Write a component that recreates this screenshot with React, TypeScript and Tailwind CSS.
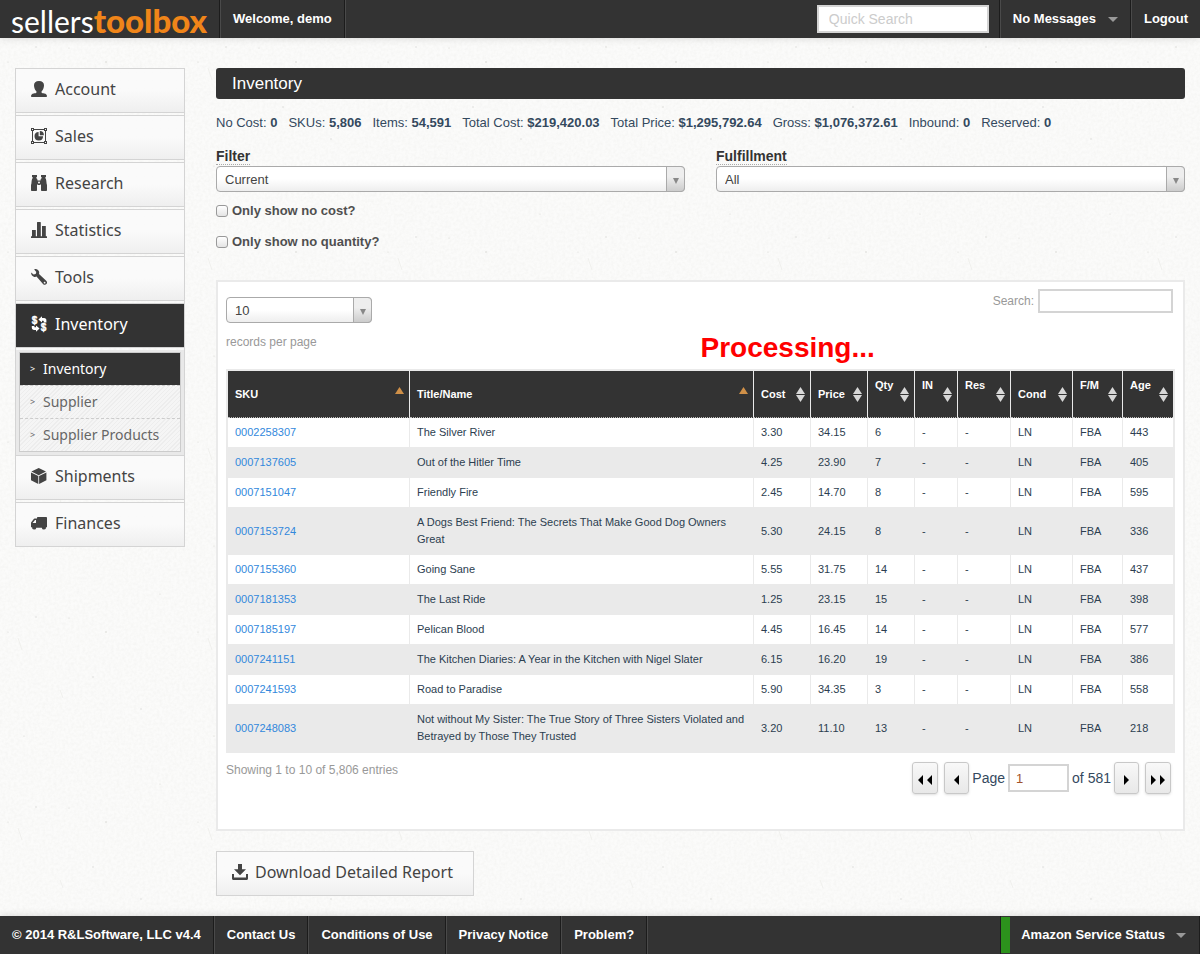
import type { ReactNode } from "react";

type IconProps = { className?: string };

const svgBase = "h-4 w-4 shrink-0";

function UserIcon({ className = "" }: IconProps) {
  return (
    <svg viewBox="0 0 16 16" fill="currentColor" className={`${svgBase} ${className}`} aria-hidden="true">
      <path d="M8 0c3.400 0 5 1.600 5 4.300 0 2.500-1 4.900-2.400 6v1.400c.4.400 1.400.5 2.700.8 1.700.4 2.700 1.100 2.700 2.700 0 .5-.3.800-.8.800H.8c-.5 0-.8-.3-.8-.8 0-1.600 1-2.300 2.700-2.700 1.300-.3 2.300-.4 2.700-.8v-1.400C4 9.200 3 6.800 3 4.300 3 1.600 4.600 0 8 0z" />
    </svg>
  );
}

function SalesIcon({ className = "" }: IconProps) {
  return (
    <svg viewBox="0 0 16 16" fill="currentColor" className={`${svgBase} ${className}`} aria-hidden="true">
      <path d="M1.500 1.500h13v13h-13z" fill="none" stroke="currentColor" strokeWidth="1" />
      <path d="M0 0h3v3H0zM13 0h3v3h-3zM0 13h3v3H0zM13 13h3v3h-3z" />
      <path d="M1 1h1v1H1zM14 1h1v1h-1zM1 14h1v1H1zM14 14h1v1h-1z" fill="#f8f8f8" />
      <path d="M7.600 3.900v4.400h4.500a4.300 4.300 0 1 1-4.500-4.400z" />
      <path d="M8.800 3.100a4.200 4.200 0 0 1 4.100 4.100H8.800z" />
    </svg>
  );
}

function BinocularsIcon({ className = "" }: IconProps) {
  return (
    <svg viewBox="0 0 16 16" fill="currentColor" className={`${svgBase} ${className}`} aria-hidden="true">
      <path d="M1 0h5v2h-.6v1.300c.7.400 1.100 1 1.100 1.900v.3h3v-.3c0-.9.400-1.500 1.100-1.900V2H10V0h5v2h-.6v1.300c.9 1 .9 2.500 1.200 5.200l.4 1.500v5.200c0 .5-.3.800-.8.800h-4.400c-.5 0-.8-.3-.8-.8V9.500H9.500c-.4.500-.9.500-1.500.5s-1.100 0-1.500-.5H6v5.700c0 .5-.3.800-.8.800H.8c-.5 0-.8-.3-.8-.8V10l.4-1.500c.3-2.700.3-4.200 1.200-5.200V2H1z" />
      <circle cx="8" cy="7.500" r="1" fill="#f8f8f8" />
    </svg>
  );
}

function BarsIcon({ className = "" }: IconProps) {
  return (
    <svg viewBox="0 0 16 16" fill="currentColor" className={`${svgBase} ${className}`} aria-hidden="true">
      <path d="M0 14.300h16V16H0zM1 8h3.800v7H1zM6 .5C6 .2 6.200 0 6.500 0h2.800c.3 0 .5.2.5.500V15H6zM11 4h3.800v11H11z" />
    </svg>
  );
}

function WrenchIcon({ className = "" }: IconProps) {
  return (
    <svg viewBox="0 0 16 16" fill="currentColor" className={`${svgBase} ${className}`} aria-hidden="true">
      <path
        fillRule="evenodd"
        d="M3.200.4c1.900-.8 4.200.2 4.800 2.100.3.900.2 1.600 0 2.400l7.200 6.800c1.100 1.100 1.100 2.500.2 3.400s-2.400.9-3.400-.2L5.500 7.600c-.9.400-1.800.4-2.700.1C1 7.100 0 5.500.1 3.500l2.500 2.100 2.100-.5.600-2.100zM13.600 12.800a.9.900 0 1 0 .01 1.800.9.900 0 0 0-.01-1.800z"
      />
    </svg>
  );
}

function ExchangeIcon({ className = "" }: IconProps) {
  return (
    <svg viewBox="0 0 16 16" fill="currentColor" className={`${svgBase} overflow-visible ${className}`} aria-hidden="true">
      <g fontSize="10" fontWeight="700" textAnchor="middle" stroke="currentColor" strokeWidth="0.4" fontFamily="Liberation Sans, sans-serif">
        <text x="3.500" y="8">$</text>
        <text x="12.500" y="15.300">$</text>
      </g>
      <path d="M7.400 3.400 11 .3v1.800h2c1.600 0 2.400.9 2.400 2.300v2h-2.600V5.300c0-.4-.2-.6-.6-.6H11v1.700zM8.600 12.600 5 15.700v-1.800H3.200c-1.600 0-2.400-.9-2.400-2.300V9.900h2.600v.8c0 .4.200.6.600.6h1V9.600z" />
    </svg>
  );
}

function BoxIcon({ className = "" }: IconProps) {
  return (
    <svg viewBox="0 0 16 16" fill="currentColor" className={`${svgBase} ${className}`} aria-hidden="true">
      <path d="M7.700 0 15 3.500 7.700 7.200.4 3.500zM0 4.400l7.300 3.700V16L0 12.200zM15.400 4.400 8.100 8.100V16l7.300-3.800z" />
    </svg>
  );
}

function TruckIcon({ className = "" }: IconProps) {
  return (
    <svg viewBox="0 0 16 16" fill="currentColor" className={`${svgBase} ${className}`} aria-hidden="true">
      <path
        fillRule="evenodd"
        d="M6.800 2h8.400c.5 0 .8.300.8.800v9.400h-1a2.100 2.100 0 0 1-4.200.5H5.300a2.100 2.100 0 0 1-4.200-.5H0V8.200c0-.5.100-.8.400-1.200l2-2.600c.4-.5.800-.8 1.400-.8H6v-.8c0-.5.300-.8.800-.8zM4 5 1.600 8H5V5z"
      />
    </svg>
  );
}

function DownloadIcon({ className = "" }: IconProps) {
  return (
    <svg viewBox="0 0 16 16" fill="currentColor" className={`${svgBase} ${className}`} aria-hidden="true">
      <path d="M6 0h4v5.200h4L8 11.200l-6-6h4z" />
      <path d="M0 10h2v3.600h12V10h2v4.500c0 .9-.6 1.500-1.500 1.500h-13C.6 16 0 15.400 0 14.500z" />
    </svg>
  );
}

function Caret() {
  return (
    <svg viewBox="0 0 10 5" className="h-[5px] w-[10px] shrink-0 fill-[#999]" aria-hidden="true">
      <path d="M0 0h10L5 5z" />
    </svg>
  );
}

function SortIcon({ active }: { active?: boolean }) {
  return (
    <svg viewBox="0 0 9 15" className="h-[15px] w-[9px] shrink-0" aria-hidden="true">
      <path d="M4.500 0 9 7H0z" fill={active ? "#d09048" : "#d8d8d8"} />
      {!active && <path d="M0 8h9l-4.500 7z" fill="#d8d8d8" />}
    </svg>
  );
}

/* Light paper grain with scattered specks, drawn behind the page content. */
function PaperTexture() {
  return (
    <svg className="pointer-events-none absolute inset-0 -z-10 h-full w-full" aria-hidden="true">
      <defs>
        <filter id="grain" x="0" y="0" width="100%" height="100%">
          <feTurbulence type="fractalNoise" baseFrequency="0.35" numOctaves="3" seed="4" />
          <feColorMatrix values="0 0 0 0 0.45  0 0 0 0 0.45  0 0 0 0 0.4  0.14 0 0 0 -0.045" />
        </filter>
        <pattern id="specks" width="190" height="190" patternUnits="userSpaceOnUse">
          <g fill="#d6d6d2">
            <circle cx="36" cy="47" r="0.7" />
            <circle cx="69" cy="48" r="0.6" />
            <circle cx="8" cy="62" r="0.6" />
            <circle cx="106" cy="62" r="0.8" />
            <circle cx="160" cy="24" r="0.6" />
            <circle cx="93" cy="107" r="0.7" />
            <circle cx="141" cy="139" r="0.7" />
            <circle cx="24" cy="166" r="0.6" />
          </g>
          <path d="M18 68l4 12M60 120l3 8" stroke="#f0f0ed" fill="none" />
        </pattern>
      </defs>
      <rect width="100%" height="100%" filter="url(#grain)" />
      <rect width="100%" height="100%" fill="url(#specks)" />
    </svg>
  );
}

const navItemClass =
  "flex h-full items-center gap-3 border-l border-r border-l-[#4a4a4a] border-r-[#1c1c1c] px-3 text-[13px] font-bold text-white";

function SideLink({ icon, label, active }: { icon: ReactNode; label: string; active?: boolean }) {
  return (
    <a
      href="#"
      className={
        active
          ? "flex items-center gap-2 border-y border-[#d4d4d4] bg-[#333] pt-2 pr-3 pb-[11px] pl-[15px] text-base leading-6 text-white"
          : "flex items-center gap-2 border-y border-[#d4d4d4] bg-linear-to-b from-[#fafafa] from-50% to-[#efefef] pt-2 pr-3 pb-[11px] pl-[15px] text-base leading-6 text-[#444]"
      }
    >
      {icon}
      {label}
    </a>
  );
}

function SubLink({ label, active }: { label: string; active?: boolean }) {
  return (
    <a
      href="#"
      className={
        active
          ? "flex h-8 items-center gap-2 bg-[#333] pl-[10px] text-sm text-white"
          : "flex h-8 items-center gap-2 pl-[10px] text-sm text-[#666]"
      }
    >
      <span className="w-[5px] text-[9px]">&gt;</span>
      {label}
    </a>
  );
}

function Select({ id, options, label }: { id: string; options: string[]; label?: string }) {
  return (
    <div className="relative">
      <select
        id={id}
        aria-label={label}
        className="block h-[26px] w-full appearance-none rounded-[4px] border border-[#aaa] bg-linear-to-b from-white from-50% to-[#eee] pt-[2px] pr-6 pl-2 text-[13px] text-[#444]"
      >
        {options.map((o) => (
          <option key={o}>{o}</option>
        ))}
      </select>
      <span className="pointer-events-none absolute inset-y-0 right-0 flex w-[19px] items-center justify-center rounded-r-[4px] border border-[#aaa] bg-linear-to-b from-[#eee] from-40% to-[#ccc] pt-[3px]">
        <svg viewBox="0 0 6 6" className="h-[6px] w-[6px] fill-[#888]" aria-hidden="true">
          <path d="M0 0h6L3 6z" />
        </svg>
      </span>
    </div>
  );
}

function Triangles({ left, count }: { left?: boolean; count: number }) {
  return (
    <svg viewBox={count === 2 ? "0 0 14 10" : "0 0 5 10"} className={count === 2 ? "h-[10px] w-[14px]" : "h-[10px] w-[5px]"} aria-hidden="true">
      <path
        d={
          left
            ? count === 2 ? "M5 0v10L0 5zM14 0v10L9 5z" : "M5 0v10L0 5z"
            : count === 2 ? "M0 0v10l5-5zM9 0v10l5-5z" : "M0 0v10l5-5z"
        }
      />
    </svg>
  );
}

function PagerButton({ label, children, wide }: { label: string; children: ReactNode; wide?: boolean }) {
  return (
    <button
      type="button"
      aria-label={label}
      className={
        wide
          ? "flex h-8 w-[26px] items-center justify-center rounded-[3px] border border-[#c8c8c8] bg-linear-to-b from-[#f8f8f8] to-[#e8e8e8] pt-1 shadow-sm"
          : "flex h-8 w-[25px] items-center justify-center rounded-[3px] border border-[#c8c8c8] bg-linear-to-b from-[#f8f8f8] to-[#e8e8e8] pt-1 shadow-sm"
      }
    >
      {children}
    </button>
  );
}

const stats = [
  ["No Cost", "0"],
  ["SKUs", "5,806"],
  ["Items", "54,591"],
  ["Total Cost", "$219,420.03"],
  ["Total Price", "$1,295,792.64"],
  ["Gross", "$1,076,372.61"],
  ["Inbound", "0"],
  ["Reserved", "0"],
];

const columns = [
  { name: "SKU", width: "w-[182px]", sorted: true },
  { name: "Title/Name", width: "", sorted: true },
  { name: "Cost", width: "w-[57px]" },
  { name: "Price", width: "w-[57px]" },
  { name: "Qty", width: "w-[47px]", top: true },
  { name: "IN", width: "w-[43px]", top: true },
  { name: "Res", width: "w-[53px]", top: true },
  { name: "Cond", width: "w-[62px]" },
  { name: "F/M", width: "w-[50px]", top: true },
  { name: "Age", width: "w-[50px]", top: true },
];

const rows = [
  ["0002258307", "The Silver River", "3.30", "34.15", "6", "-", "-", "LN", "FBA", "443"],
  ["0007137605", "Out of the Hitler Time", "4.25", "23.90", "7", "-", "-", "LN", "FBA", "405"],
  ["0007151047", "Friendly Fire", "2.45", "14.70", "8", "-", "-", "LN", "FBA", "595"],
  ["0007153724", "A Dogs Best Friend: The Secrets That Make Good Dog Owners Great", "5.30", "24.15", "8", "-", "-", "LN", "FBA", "336"],
  ["0007155360", "Going Sane", "5.55", "31.75", "14", "-", "-", "LN", "FBA", "437"],
  ["0007181353", "The Last Ride", "1.25", "23.15", "15", "-", "-", "LN", "FBA", "398"],
  ["0007185197", "Pelican Blood", "4.45", "16.45", "14", "-", "-", "LN", "FBA", "577"],
  ["0007241151", "The Kitchen Diaries: A Year in the Kitchen with Nigel Slater", "6.15", "16.20", "19", "-", "-", "LN", "FBA", "386"],
  ["0007241593", "Road to Paradise", "5.90", "34.35", "3", "-", "-", "LN", "FBA", "558"],
  ["0007248083", "Not without My Sister: The True Story of Three Sisters Violated and Betrayed by Those They Trusted", "3.20", "11.10", "13", "-", "-", "LN", "FBA", "218"],
];

function Header() {
  return (
    <header className="flex h-[38px] items-center bg-[#333] shadow-[0_0_8px_rgba(0,0,0,0.15)]">
      <a
        href="#"
        className="flex h-full w-[220px] shrink-0 items-baseline border-r border-[#1c1c1c] pl-[11px] font-['Lato',sans-serif] text-[30px] leading-[40px] text-white"
      >
        sellers<span className="text-[33px] font-black text-[#f08519]">toolbox</span>
      </a>
      <a href="#" className={navItemClass}>Welcome, demo</a>
      <div className="flex h-full flex-1 items-center justify-end border-l border-r border-l-[#4a4a4a] border-r-[#1c1c1c] pr-[10px]">
        <input
          type="search"
          aria-label="Quick Search"
          placeholder="Quick Search"
          className="h-7 w-[172px] border-2 border-[#d4d4d4] bg-white px-[10px] text-sm text-[#444] placeholder:text-[#ccc]"
        />
      </div>
      <button type="button" className={navItemClass}>
        No Messages
        <Caret />
      </button>
      <a href="#" className="flex h-full items-center border-l border-[#4a4a4a] px-3 text-[13px] font-bold text-white">
        Logout
      </a>
    </header>
  );
}

function Sidebar() {
  return (
    <nav className="w-[170px] shrink-0 self-start border-x border-[#d4d4d4] font-['Noto_Sans',sans-serif]">
      <ul className="flex flex-col gap-[2px]">
        <li><SideLink icon={<UserIcon />} label="Account" /></li>
        <li><SideLink icon={<SalesIcon />} label="Sales" /></li>
        <li><SideLink icon={<BinocularsIcon />} label="Research" /></li>
        <li><SideLink icon={<BarsIcon />} label="Statistics" /></li>
        <li><SideLink icon={<WrenchIcon />} label="Tools" /></li>
        <li><SideLink icon={<ExchangeIcon />} label="Inventory" active /></li>
        <li>
          <div className="bg-[#e9e9e9] px-[3px] pt-[2px] pb-[3px]">
            <ul className="divide-y divide-dashed divide-[#ccc] border border-[#ccc] bg-[repeating-linear-gradient(135deg,#f5f5f5_0px,#f5f5f5_2px,#ededed_2px,#ededed_3px)]">
              <li><SubLink label="Inventory" active /></li>
              <li><SubLink label="Supplier" /></li>
              <li><SubLink label="Supplier Products" /></li>
            </ul>
          </div>
          <SideLink icon={<BoxIcon />} label="Shipments" />
        </li>
        <li><SideLink icon={<TruckIcon />} label="Finances" /></li>
      </ul>
    </nav>
  );
}

function InventoryTable() {
  return (
    <table className="w-full table-fixed border-separate border-spacing-0 border-2 border-[#eaeaea] text-left text-[11px] leading-[17px] text-[#2c3e50]">
      <thead>
        <tr>
          {columns.map((c) => (
            <th
              key={c.name}
              scope="col"
              className={`${c.width} border-r border-b border-r-[#eaeaea] border-b-[#bbb] [border-bottom-style:dotted] bg-[#333] p-0 font-bold text-white last:border-r-0`}
            >
              <button type="button" className="flex h-[46px] w-full items-center justify-between py-[6px] pr-[5px] pl-[7px] text-left">
                <span className={c.top ? "self-start" : ""}>{c.name}</span>
                <SortIcon active={c.sorted} />
              </button>
            </th>
          ))}
        </tr>
      </thead>
      <tbody>
        {rows.map((r) => (
          <tr key={r[0]} className="group odd:bg-white even:bg-[#eaeaea]">
            {r.map((cell, i) => (
              <td
                key={i}
                className="border-r border-b border-[#eaeaea] px-[7px] py-[6px] align-middle group-last:border-b-0 last:border-r-0"
              >
                {i === 0 ? <a href="#" className="text-[#3288dc]">{cell}</a> : cell}
              </td>
            ))}
          </tr>
        ))}
      </tbody>
    </table>
  );
}

export default function App() {
  return (
    <div className="relative isolate flex min-h-screen flex-col bg-[#fbfbfa] font-['Liberation_Sans',Arial,sans-serif] text-[#444]">
      <PaperTexture />
      <Header />

      <div className="flex flex-1 gap-[31px] px-[15px] pt-[30px] pb-5">
        <Sidebar />

        <main className="min-w-0 flex-1">
          <h1 className="rounded-[3px] bg-[#333] px-4 text-[17px] leading-[31px] text-white">Inventory</h1>

          <ul className="mt-[15px] flex flex-wrap gap-x-[11px] text-[13px] leading-[18px] text-[#34495e]">
            {stats.map(([k, v]) => (
              <li key={k}>
                {k}: <strong>{v}</strong>
              </li>
            ))}
          </ul>

          <form className="mt-4">
            <div className="grid grid-cols-2 gap-[31px]">
              <div>
                <label htmlFor="filter" className="mb-px block w-fit border-b border-dotted border-[#aaa] text-sm leading-4 font-bold text-[#333]">
                  Filter
                </label>
                <Select id="filter" options={["Current", "All"]} />
              </div>
              <div>
                <label htmlFor="fulfillment" className="mb-px block w-fit border-b border-dotted border-[#aaa] text-sm leading-4 font-bold text-[#333]">
                  Fulfillment
                </label>
                <Select id="fulfillment" options={["All", "Amazon", "Merchant"]} />
              </div>
            </div>
            <div className="mt-[9px] flex flex-col items-start gap-[11px]">
              {["Only show no cost?", "Only show no quantity?"].map((t) => (
                <label key={t} className="flex items-center gap-1 text-[13px] leading-5 font-bold text-[#4f4f4f]">
                  <input
                    type="checkbox"
                    className="h-3 w-3 appearance-none rounded-[3px] border border-[#999] bg-linear-to-b from-white to-[#e4e4e4] checked:bg-[#3288dc]"
                  />
                  {t}
                </label>
              ))}
            </div>
          </form>

          <section className="relative mt-7 border-2 border-[#eaeaea] bg-white px-2 pt-[7px] pb-[35px]">
            <div className="flex items-start justify-between text-xs text-[#999]">
              <div className="mt-2 mb-[18px] flex w-[146px] flex-col gap-[10px]">
                <Select id="page-size" options={["10", "25", "50", "100"]} />
                <label htmlFor="page-size" className="leading-[18px]">records per page</label>
              </div>
              <label className="flex items-center gap-1 pr-[2px]">
                Search:
                <input type="search" className="h-6 w-[135px] border-2 border-[#d4d4d4] bg-white px-2 text-[#444]" />
              </label>
            </div>

            <div role="status" className="absolute top-12 left-1/2 text-[28px] leading-9 font-bold text-[#f00]">
              Processing...
            </div>

            <InventoryTable />

            <div className="mt-[9px] flex items-start justify-between">
              <p className="text-xs leading-4 text-[#999]">Showing 1 to 10 of 5,806 entries</p>
              <div className="flex items-center gap-[3px] pr-1 text-sm text-[#34495e]">
                <div className="flex gap-[6px]">
                  <PagerButton label="First page" wide><Triangles left count={2} /></PagerButton>
                  <PagerButton label="Previous page"><Triangles left count={1} /></PagerButton>
                </div>
                <label htmlFor="page">Page</label>
                <input
                  id="page"
                  type="text"
                  defaultValue="1"
                  className="h-7 w-[61px] border-2 border-[#d4d4d4] bg-white px-[6px] text-[13px] text-[#a0522d]"
                />
                <span>of 581</span>
                <div className="flex gap-[6px]">
                  <PagerButton label="Next page"><Triangles count={1} /></PagerButton>
                  <PagerButton label="Last page" wide><Triangles count={2} /></PagerButton>
                </div>
              </div>
            </div>
          </section>

          <button
            type="button"
            className="mt-5 flex items-center gap-[7px] border border-[#d4d4d4] bg-linear-to-b from-[#fafafa] from-50% to-[#efefef] pt-2 pr-5 pb-[11px] pl-[15px] font-['Noto_Sans',sans-serif] text-base leading-6 text-[#444]"
          >
            <DownloadIcon />
            Download Detailed Report
          </button>
        </main>
      </div>

      <footer className="flex h-[38px] items-center bg-[#333] shadow-[0_0_8px_rgba(0,0,0,0.15)]">
        <p className="flex h-full items-center border-r border-[#1c1c1c] px-3 text-[13px] font-bold text-white">
          © 2014 R&amp;LSoftware, LLC v4.4
        </p>
        <a href="#" className={navItemClass}>Contact Us</a>
        <a href="#" className={navItemClass}>Conditions of Use</a>
        <a href="#" className={navItemClass}>Privacy Notice</a>
        <a href="#" className={navItemClass}>Problem?</a>
        <div className="h-full flex-1 border-l border-r border-l-[#4a4a4a] border-r-[#1c1c1c]" />
        <button type="button" className="flex h-full items-center gap-[11px] border-r border-[#1c1c1c] py-px pr-[13px] text-[13px] font-bold text-white">
          <span className="h-full w-[9px] bg-[#2c921c]" />
          Amazon Service Status
          <Caret />
        </button>
      </footer>
    </div>
  );
}
